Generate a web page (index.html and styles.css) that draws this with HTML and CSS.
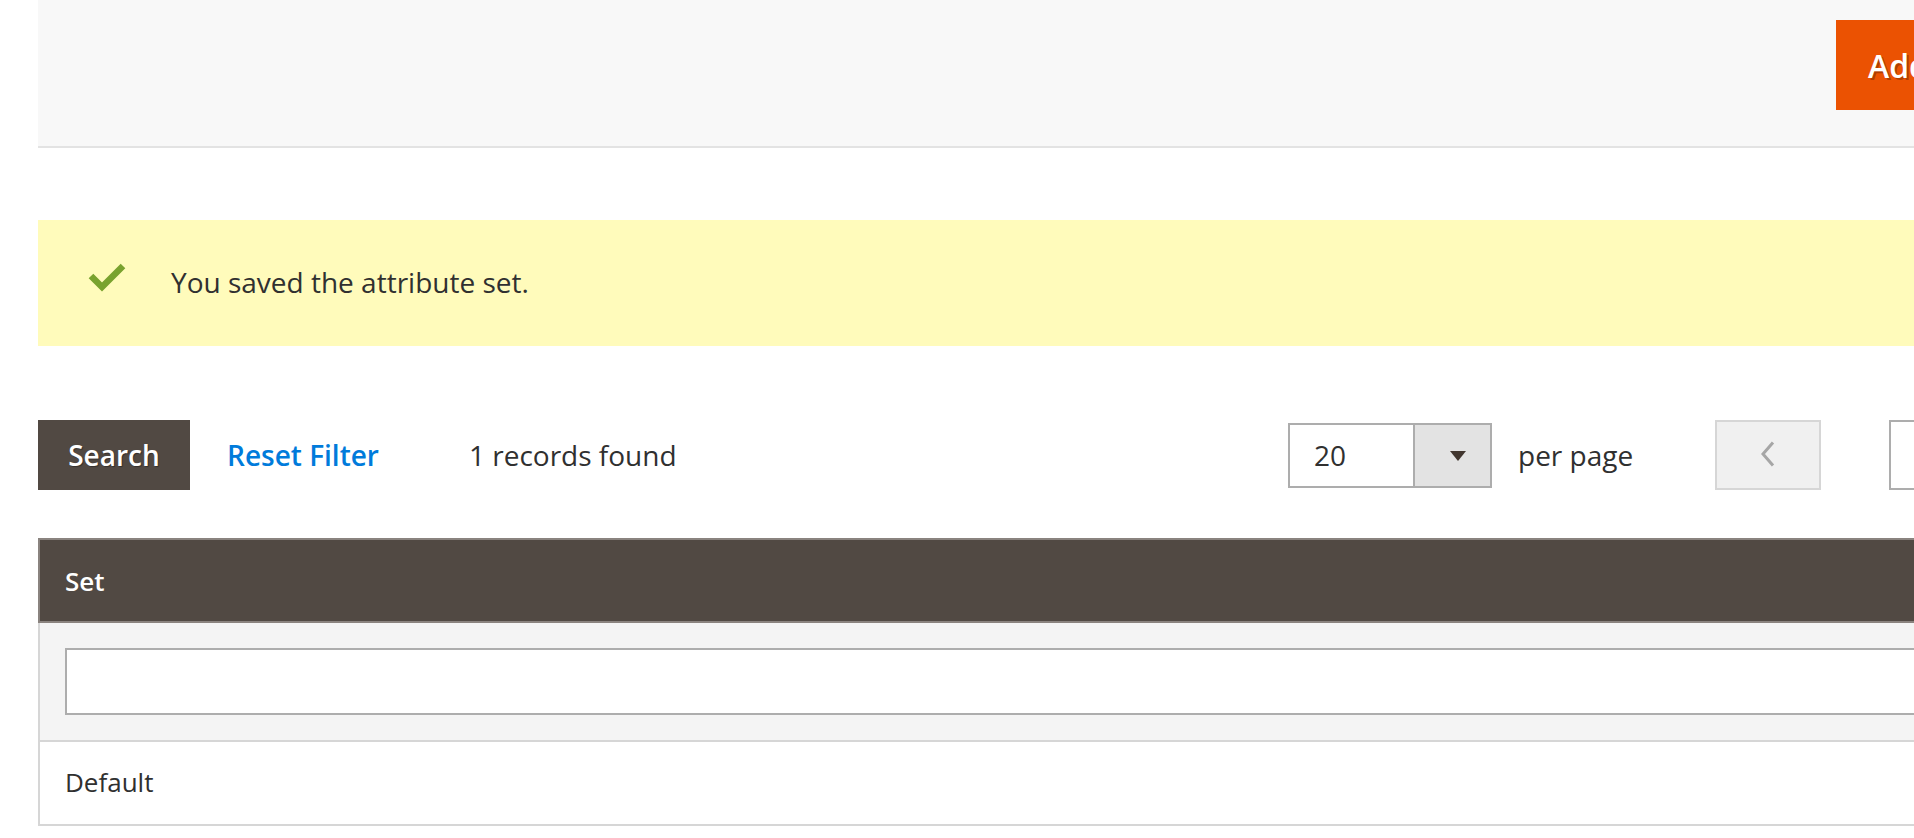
FILE: index.html
```html
<!DOCTYPE html>
<html lang="en">
<head>
<meta charset="utf-8">
<title>Attribute Sets</title>
<link rel="stylesheet" href="styles.css">
</head>
<body>
<div class="page">
  <header class="page-actions">
    <div class="page-title"></div>
    <button class="btn-primary" type="button">Add New Set</button>
  </header>

  <div class="message">
    <svg class="message-icon" width="38" height="29" viewBox="0 0 38 29" aria-hidden="true">
      <polyline points="3,13 14,24 35,3" fill="none" stroke="#79a22e" stroke-width="6.5" stroke-linecap="butt" stroke-linejoin="miter"/>
    </svg>
    <span class="message-text">You saved the attribute set.</span>
  </div>

  <div class="toolbar">
    <div class="toolbar-left">
      <button class="btn-search" type="button">Search</button>
      <a class="link-reset" href="#">Reset Filter</a>
      <span class="records">1 records found</span>
    </div>
    <div class="toolbar-right">
      <div class="select">
        <span class="select-value">20</span>
        <span class="select-btn"><span class="select-arrow"></span></span>
      </div>
      <span class="per-page">per page</span>
      <button class="btn-prev" type="button" aria-label="Previous page">
        <svg width="16" height="26" viewBox="0 0 16 26" aria-hidden="true">
          <polyline points="13,1.5 3,13 13,24.5" fill="none" stroke="#a6a6a6" stroke-width="3"/>
        </svg>
      </button>
      <input class="page-input" type="text" value="1">
      <span class="page-of">of 1</span>
    </div>
  </div>

  <table class="grid">
    <thead>
      <tr><th>Set</th></tr>
    </thead>
    <tbody>
      <tr class="filter-row"><td><input class="filter-input" type="text"></td></tr>
      <tr class="data-row"><td>Default</td></tr>
    </tbody>
  </table>
</div>
</body>
</html>
```

FILE: styles.css
```css
html, body {
  margin: 0;
  padding: 0;
  overflow: hidden;
  background: #ffffff;
}

body {
  font-family: "Open Sans", "Liberation Sans", sans-serif;
  font-size: 28px;
  line-height: 38px;
  color: #303030;
}

.page {
  margin-left: 38px;
  width: 2088px;
}

/* header */
.page-actions {
  display: flex;
  align-items: flex-start;
  box-sizing: border-box;
  height: 148px;
  padding: 20px 30px 0 0;
  background: #f8f8f8;
  border-bottom: 2px solid #e3e3e3;
}

.page-title {
  flex: 1;
}

.btn-primary {
  width: 260px;
  height: 90px;
  padding: 0 32px;
  border: 0;
  background: #eb5202;
  color: #ffffff;
  font-family: "Open Sans", "Liberation Sans", sans-serif;
  font-size: 32px;
  font-weight: 600;
  text-align: left;
  text-shadow: 2px 2px 0 rgba(0, 0, 0, 0.25);
  white-space: nowrap;
}

/* message */
.message {
  display: flex;
  align-items: flex-start;
  margin-top: 72px;
  height: 126px;
  box-sizing: border-box;
  padding: 43px 80px 0 50px;
  background: #fffbbb;
}

.message-icon {
  flex: none;
  margin-right: 45px;
}

/* toolbar */
.toolbar {
  display: grid;
  grid-template-columns: 1250px auto;
  align-items: center;
  margin-top: 74px;
  height: 70px;
}

.toolbar-left,
.toolbar-right {
  display: flex;
  align-items: center;
}

.btn-search {
  height: 70px;
  width: 152px;
  padding: 0;
  border: 0;
  background: #514943;
  color: #ffffff;
  font-family: "Open Sans", "Liberation Sans", sans-serif;
  font-size: 28px;
  font-weight: 600;
  text-shadow: 1px 1px 1px rgba(0, 0, 0, 0.35);
}

.link-reset {
  margin-left: 37px;
  color: #007bdb;
  font-weight: 600;
  text-decoration: none;
}

.records {
  margin-left: 90px;
}

.select {
  display: flex;
  width: 204px;
  height: 65px;
  box-sizing: border-box;
  border: 2px solid #adadad;
  background: #ffffff;
}

.select-value {
  flex: 1;
  padding-left: 24px;
  line-height: 61px;
}

.select-btn {
  display: flex;
  align-items: center;
  justify-content: center;
  width: 77px;
  padding-left: 10px;
  box-sizing: border-box;
  background: #e3e3e3;
  border-left: 2px solid #adadad;
}

.select-arrow {
  width: 0;
  height: 0;
  margin-top: 2px;
  border-left: 8px solid transparent;
  border-right: 8px solid transparent;
  border-top: 10px solid #41362f;
}

.per-page {
  margin-left: 26px;
}

.btn-prev {
  display: flex;
  align-items: center;
  justify-content: center;
  margin-left: 82px;
  width: 106px;
  height: 70px;
  padding: 0 0 2px;
  box-sizing: border-box;
  background: #f0f0f0;
  border: 2px solid #d6d6d6;
}

.page-input {
  margin-left: 68px;
  width: 90px;
  height: 70px;
  box-sizing: border-box;
  border: 2px solid #adadad;
  font-family: "Open Sans", "Liberation Sans", sans-serif;
  font-size: 28px;
  text-align: center;
  color: #303030;
}

.page-of {
  margin-left: 20px;
}

/* grid */
.grid {
  margin-top: 48px;
  width: 2088px;
  border-collapse: separate;
  border-spacing: 0;
  font-size: 26px;
}

.grid th {
  padding: 22px 25px 21px;
  background: #514943;
  color: #ffffff;
  font-weight: 600;
  text-align: left;
  border: 2px solid #8a837f;
}

.grid td {
  border-left: 2px solid #d6d6d6;
  border-right: 2px solid #d6d6d6;
  border-bottom: 2px solid #d6d6d6;
}

.filter-row td {
  padding: 25px 25px;
  background: #f4f4f4;
}

.filter-input {
  display: block;
  width: 100%;
  height: 67px;
  box-sizing: border-box;
  border: 2px solid #adadad;
  background: #ffffff;
  font-family: "Open Sans", "Liberation Sans", sans-serif;
  font-size: 28px;
}

.data-row td {
  padding: 21px 25px 23px;
  background: #ffffff;
}
```
